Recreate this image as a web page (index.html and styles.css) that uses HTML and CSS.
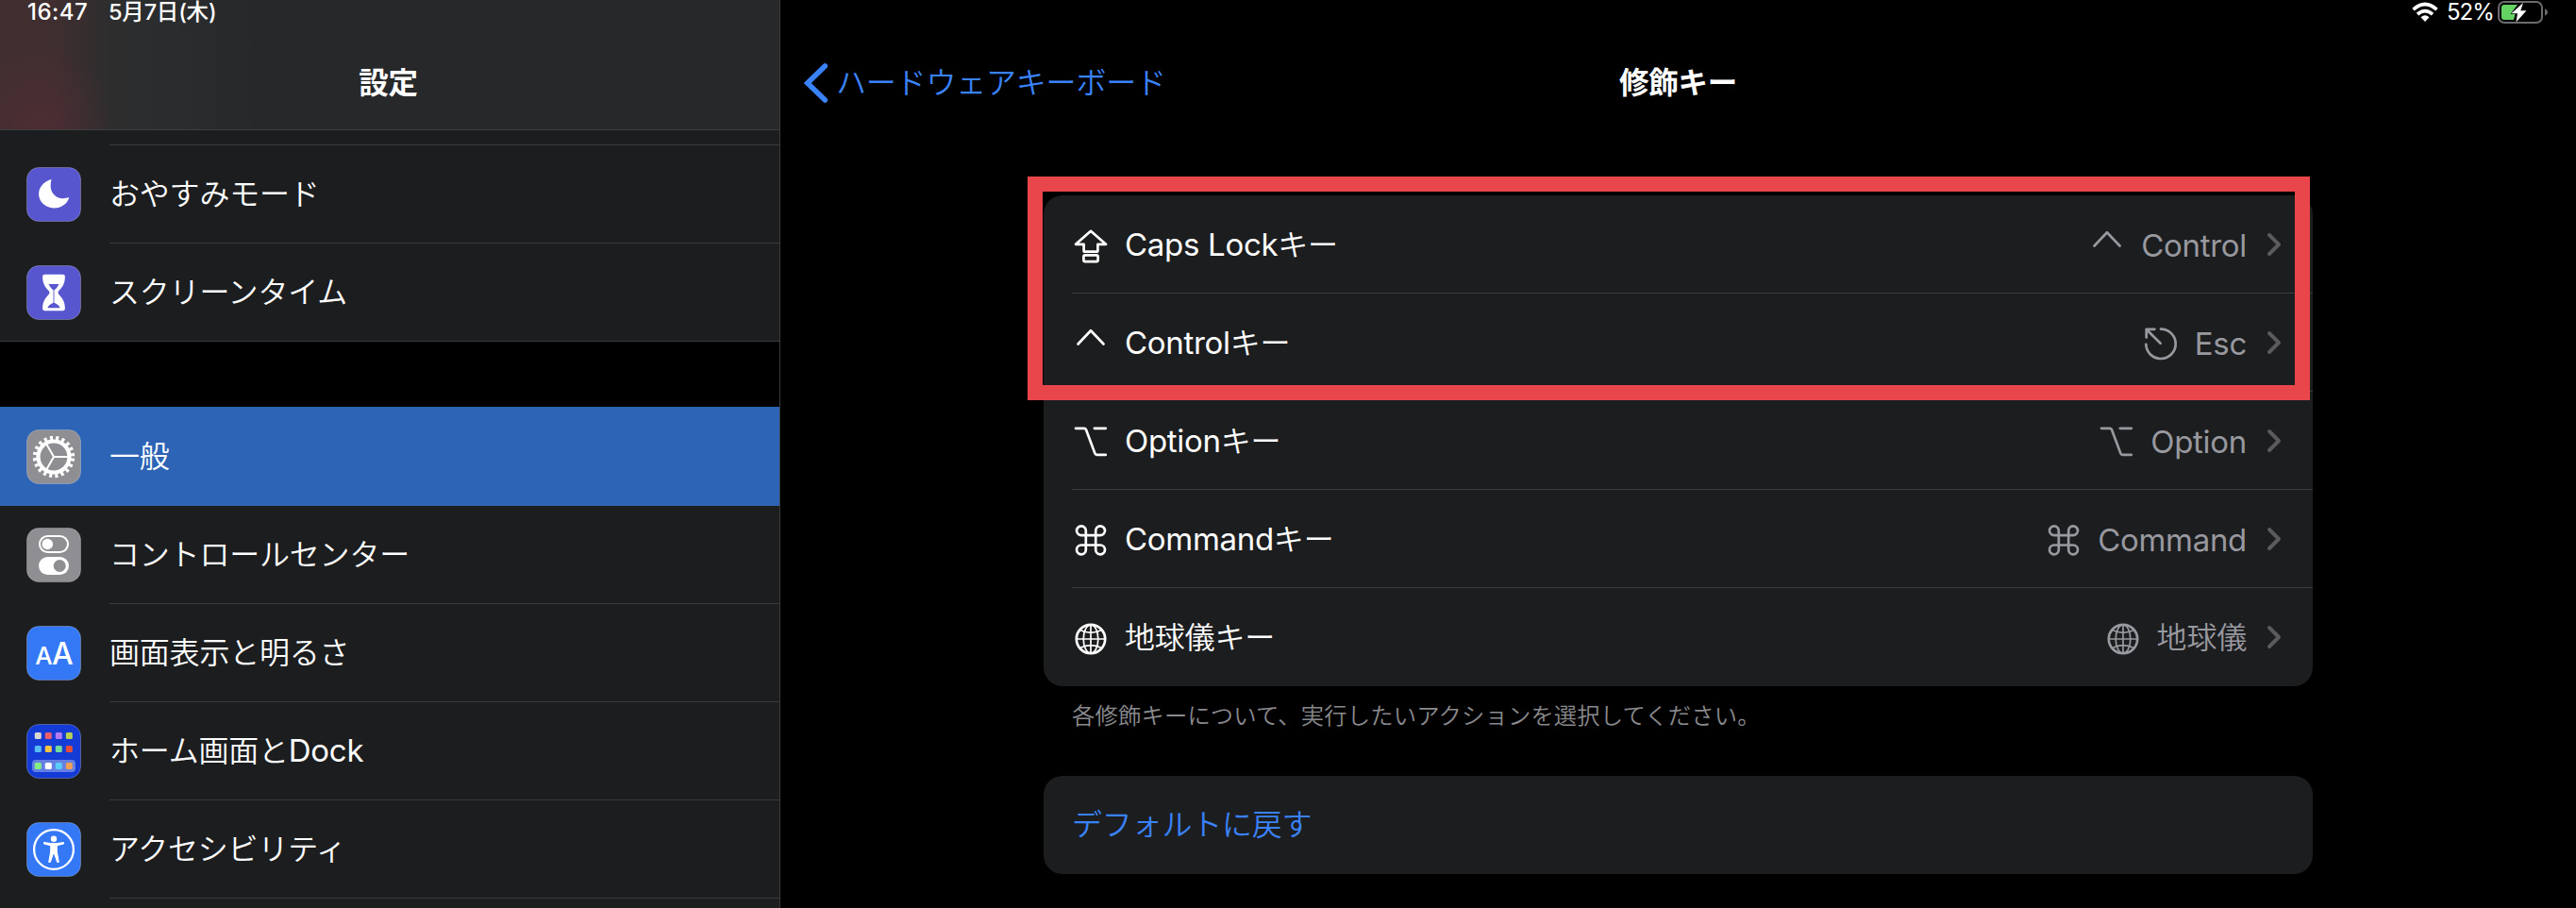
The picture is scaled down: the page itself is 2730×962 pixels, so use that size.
FILE: index.html
```html
<!DOCTYPE html>
<html lang="ja">
<head>
<meta charset="utf-8">
<title>設定</title>
<link rel="stylesheet" href="styles.css">
</head>
<body>
<svg class="sprite" aria-hidden="true">
  <symbol id="caps" viewBox="0 0 40 40"><path d="M20 5.8 36 19.8H27.4V26.4Q27.4 27.6 26.2 27.6H13.8Q12.6 27.6 12.6 26.4V19.8H4Z"/><rect x="12.4" y="31.4" width="15.2" height="6.8" rx="1.6"/></symbol>
  <symbol id="ctrl" viewBox="0 0 40 40"><path d="M6.5 21.5 20 7.3 33.5 21.5"/></symbol>
  <symbol id="esc" viewBox="0 0 40 40"><path d="M20 5.6A15.7 15.7 0 1 1 4.3 21.8M19.6 20.8 5 6.2M4.7 14.6V5.8H13.4"/></symbol>
  <symbol id="opt" viewBox="0 0 40 40"><path d="M4 6.8H13Q14.4 6.8 14.9 8L24.5 33.6Q25 34.8 26.4 34.8H35.8M23.8 6.8H35.8"/></symbol>
  <symbol id="cmd" viewBox="0 0 40 40"><path d="M14.8 16.1V11.4A4.9 4.9 0 1 0 9.9 16.1H30.1A4.9 4.9 0 1 0 25.2 11.4V31.6A4.9 4.9 0 1 0 30.1 26.5H9.9A4.9 4.9 0 1 0 14.8 31.6Z"/></symbol>
  <symbol id="globe" viewBox="0 0 40 40"><g><circle cx="20" cy="22" r="15.2"/></g><g class="thin"><ellipse cx="20" cy="22" rx="7.8" ry="15"/><path d="M20 7V37M5 22H35M8.4 12.6Q20 18 31.6 12.6M8.4 31.4Q20 26 31.6 31.4"/></g></symbol>
  <symbol id="chev" viewBox="0 0 18 28"><path d="M4 4 14 14 4 24"/></symbol>
</svg>
<div class="screen">
  <aside class="sidebar">
    <header class="side-head">
      <div class="status"><span class="time">16:47</span><span class="date">5月7日(木)</span></div>
      <h1 class="title">設定</h1>
    </header>
    <div class="list">
      <div class="stub"></div>
      <div class="item">
        <svg class="app" viewBox="0 0 58 58"><rect class="bg indigo" x=".5" y=".5" width="57" height="57" rx="12.5"/><path fill="#fff" d="M26.6 13C12 17 9 32 19 40C28 47 43 43 45.2 31.8C35.500 36.500 22 29.500 26.600 13Z"/></svg>
        <div class="cell">おやすみモード</div>
      </div>
      <div class="item">
        <svg class="app" viewBox="0 0 58 58"><rect class="bg indigo" x=".5" y=".5" width="57" height="57" rx="12.5"/><path fill="#fff" d="M19.500 9.700H38.500Q41 9.700 40.900 12.500C40.700 21 37 24 34 27.500Q33 29 34 30.500C37 34 40.700 37 40.900 45.500Q41 48.300 38.500 48.300H19.500Q17 48.300 17.100 45.500C17.300 37 21 34 24 30.500Q25 29 24 27.500C21 24 17.300 21 17.100 12.500Q17 9.700 19.500 9.700Z"/><path fill="#5756ce" d="M23.500 20H34.500Q32.500 24 30 26V40Q34 41.500 35.500 44.500Q35.500 45.300 34.500 45.300H23.500Q22.500 45.300 22.500 44.500Q24 41.500 28 40V26Q25.500 24 23.500 20Z"/><path stroke="#fff" stroke-width=".7" d="M28.300 26V40M29.700 26V40"/></svg>
        <div class="cell">スクリーンタイム</div>
      </div>
      <div class="break"></div>
      <div class="item selected">
        <svg class="app" viewBox="0 0 58 58"><rect class="bg gray" x=".5" y=".5" width="57" height="57" rx="12.5"/><g fill="none" stroke="#fff"><circle cx="29" cy="29" r="16.500" stroke-width="4.200"/><circle cx="29" cy="29" r="20" stroke-width="4.400" stroke-dasharray="3.100 3.183" stroke-dashoffset="-1.600"/><path stroke-width="2" d="M29 29H45M29 29 21 15.100M29 29 21 42.900"/></g></svg>
        <div class="cell">一般</div>
      </div>
      <div class="item first">
        <svg class="app" viewBox="0 0 58 58"><rect class="bg gray" x=".5" y=".5" width="57" height="57" rx="12.5"/><rect x="14" y="9" width="30" height="17" rx="8.500" fill="none" stroke="#fff" stroke-width="2"/><circle cx="22.300" cy="17.500" r="5.800" fill="#fff"/><rect x="13" y="31" width="32" height="19" rx="9.500" fill="#fff"/><circle cx="35.200" cy="40.500" r="6.500" fill="#8e8e93"/></svg>
        <div class="cell">コントロールセンター</div>
      </div>
      <div class="item">
        <svg class="app" viewBox="0 0 58 58"><rect class="bg blue" x=".5" y=".5" width="57" height="57" rx="12.5"/><text class="glyph" x="9.200" y="41" font-size="26">A</text><text class="glyph" x="27" y="41" font-size="32">A</text></svg>
        <div class="cell">画面表示と明るさ</div>
      </div>
      <div class="item">
        <svg class="app" viewBox="0 0 58 58"><rect class="bg home" x=".5" y=".5" width="57" height="57" rx="12.5"/><rect x="6" y="38" width="46" height="13" rx="4" fill="#6580e5"/>
          <rect x="8.800" y="9" width="7" height="7" rx="1.500" fill="#d8d8d0"/><rect x="19.800" y="9" width="7" height="7" rx="1.500" fill="#ee5f68"/><rect x="30.800" y="9" width="7" height="7" rx="1.500" fill="#b27bf2"/><rect x="41.800" y="9" width="7" height="7" rx="1.500" fill="#b9d150"/>
          <rect x="8.800" y="23" width="7" height="7" rx="1.500" fill="#57bdf5"/><rect x="19.800" y="23" width="7" height="7" rx="1.500" fill="#f9c440"/><rect x="30.800" y="23" width="7" height="7" rx="1.500" fill="#70d99b"/><rect x="41.800" y="23" width="7" height="7" rx="1.500" fill="#e84d3a"/>
          <rect x="8.800" y="41" width="7" height="7" rx="1.500" fill="#83ef7e"/><rect x="19.800" y="41" width="7" height="7" rx="1.500" fill="#fff"/><rect x="30.800" y="41" width="7" height="7" rx="1.500" fill="#5accf8"/><rect x="41.800" y="41" width="7" height="7" rx="1.500" fill="#f2a154"/></svg>
        <div class="cell">ホーム画面と<span class="latin">Dock</span></div>
      </div>
      <div class="item">
        <svg class="app" viewBox="0 0 58 58"><rect class="bg blue" x=".5" y=".5" width="57" height="57" rx="12.5"/><circle cx="29" cy="29" r="20.900" fill="none" stroke="#fff" stroke-width="2.300"/><circle cx="29" cy="17.700" r="3.200" fill="#fff"/><path fill="#fff" stroke="#fff" stroke-width="1" stroke-linejoin="round" d="M18.500 21.500 25.500 22.500H32.500L39.500 21.500V23L32.300 24.800V31L34.300 42.500H32.700L29.600 33.500H28.400L25.300 42.500H23.700L25.700 31V24.800L18.500 23Z"/></svg>
        <div class="cell">アクセシビリティ</div>
      </div>
      <div class="item"><div class="cell"></div></div>
    </div>
  </aside>
  <main class="detail">
    <header class="nav">
      <div class="status right">
        <svg class="wifi" viewBox="0 0 28 22"><g fill="none" stroke="#fff" stroke-width="3.600"><path d="M1.500 8.200Q14 -3.200 26.500 8.200"/><path d="M6 13.200Q14 6 22 13.200"/></g><path fill="#fff" d="M9.500 16.200Q14 12.200 18.500 16.200L14 20.900Z"/></svg>
        <span class="pct">52%</span>
        <svg class="battery" viewBox="0 0 54 26"><rect x="1" y="2" width="46" height="22" rx="6" fill="none" stroke="#6b6b6d" stroke-width="2"/><path fill="#6b6b6d" d="M50 9.200Q53 10.500 53 13T50 16.800Z"/><path fill="#65d264" d="M7 5H21L13.500 15H18.500L17 21H7Q4 21 4 18V8Q4 5 7 5Z"/><path fill="#fff" d="M27 3 14.500 14.300H21L19.500 23.500 30.500 11.300H24.300Z"/></svg>
      </div>
      <div class="bar">
        <a class="back"><svg viewBox="0 0 26 44"><path d="M22.300 4 3.800 22 22.300 40"/></svg><span>ハードウェアキーボード</span></a>
        <h2 class="title">修飾キー</h2>
      </div>
    </header>
    <div class="content">
      <section class="card">
        <div class="row"><svg class="key"><use href="#caps"/></svg><span class="label"><span class="latin">Caps Lock</span>キー</span><span class="value"><svg class="key"><use href="#ctrl"/></svg><span class="latin">Control</span></span><svg class="chev"><use href="#chev"/></svg></div>
        <div class="row"><svg class="key"><use href="#ctrl"/></svg><span class="label"><span class="latin">Control</span>キー</span><span class="value"><svg class="key"><use href="#esc"/></svg><span class="latin">Esc</span></span><svg class="chev"><use href="#chev"/></svg></div>
        <div class="row"><svg class="key"><use href="#opt"/></svg><span class="label"><span class="latin">Option</span>キー</span><span class="value"><svg class="key"><use href="#opt"/></svg><span class="latin">Option</span></span><svg class="chev"><use href="#chev"/></svg></div>
        <div class="row"><svg class="key"><use href="#cmd"/></svg><span class="label"><span class="latin">Command</span>キー</span><span class="value"><svg class="key"><use href="#cmd"/></svg><span class="latin">Command</span></span><svg class="chev"><use href="#chev"/></svg></div>
        <div class="row"><svg class="key"><use href="#globe"/></svg><span class="label">地球儀キー</span><span class="value"><svg class="key"><use href="#globe"/></svg><span class="word">地球儀</span></span><svg class="chev"><use href="#chev"/></svg></div>
        <div class="highlight"></div>
      </section>
      <p class="note">各修飾キーについて、実行したいアクションを選択してください。</p>
      <section class="card reset">デフォルトに戻す</section>
    </div>
  </main>
</div>
</body>
</html>
```
FILE: styles.css
```css
* { box-sizing: border-box; }

body {
  margin: 0;
  background: #000;
  color: #fff;
  font-family: Inter, "Noto Sans CJK JP", sans-serif;
  font-size: 32px;
  font-weight: 350;
  letter-spacing: -0.2px;
  overflow: hidden;
}

.sprite { display: none; }

.latin {
  font-size: 33px;
  font-weight: 400;
  line-height: 1;
  letter-spacing: -0.3px;
}

.screen {
  display: flex;
  width: 2730px;
  height: 962px;
  overflow: hidden;
}

/* Sidebar */
.sidebar {
  flex: none;
  width: 827px;
  border-right: 1px solid #3a3a3c;
  background: #1c1d1f;
}

.side-head {
  height: 138px;
  border-bottom: 1px solid #3d3e40;
  background:
    radial-gradient(ellipse 75px 90px at 45px 137px, rgba(90, 44, 56, .5), transparent),
    linear-gradient(90deg, #412e2f 0, #3f2e30 60px, #2e2d2e 115px, #2b2d2e 150px, #27282a 280px);
}

.status {
  display: flex;
  height: 26px;
  align-items: center;
  line-height: 26px;
  font-size: 24px;
  font-weight: 450;
}

.side-head .status { padding-left: 29px; }
.time { width: 86px; letter-spacing: .5px; }
.date { font-size: 23.500px; letter-spacing: -.2px; }

.title {
  margin: 0;
  font-size: 31.500px;
  font-weight: 600;
  letter-spacing: -.2px;
  line-height: 48px;
  text-align: center;
}

.side-head .title { margin: 38px 3px 0 0; }

.list { display: flex; flex-direction: column; }
.stub { height: 15px; }

.item {
  display: flex;
  flex: none;
  height: 104px;
  padding-left: 28px;
  align-items: center;
}

.app { flex: none; width: 58px; height: 58px; margin-top: 1px; }
.app + .cell { margin-left: 30px; }
.item > .cell:only-child { margin-left: 88px; }

.cell {
  flex: 1;
  height: 104px;
  border-top: 1px solid #3a3b3d;
  line-height: 103px;
}

.break {
  height: 70px;
  border-top: 1px solid #3a3b3d;
  background: #000;
}

.item.selected { height: 105px; background: #2d64b6; }
.item.first { height: 103px; }
.item.selected .cell, .item.first .cell { height: 103px; border-top: 0; }

.bg { stroke: rgba(255, 255, 255, .25); stroke-width: 1; }
.indigo { fill: #5756ce; }
.gray { fill: #8e8e93; }
.blue { fill: #3478f6; }
.home { fill: #143bd5; }
.glyph { fill: #fff; font-weight: 450; letter-spacing: 0; }

/* Detail pane */
.detail { flex: 1; background: #000; }
.nav { height: 207px; }

.status.right {
  justify-content: flex-end;
  padding-right: 29px;
}

.wifi { width: 28px; height: 22px; margin-right: 9px; }
.pct { width: 54px; font-size: 24px; font-weight: 400; letter-spacing: -1px; }
.battery { width: 54px; height: 26px; }

.bar {
  display: grid;
  grid-template-columns: 1fr auto 1fr;
  align-items: center;
  height: 48px;
  margin-top: 38px;
}

.back {
  display: flex;
  align-items: center;
  padding-left: 25px;
  gap: 8px;
  color: #3a82f7;
  line-height: 48px;
}

.back svg { width: 26px; height: 44px; }
.back path { fill: none; stroke: #3a82f7; stroke-width: 5.600; stroke-linecap: round; stroke-linejoin: miter; }

.content { width: 1345px; margin-left: 279px; }

.card {
  position: relative;
  border-radius: 20px;
  background: #1c1d1f;
}

.row {
  display: flex;
  align-items: center;
  height: 104px;
  padding: 0 32px 1px 30px;
  background: linear-gradient(#3a3b3d, #3a3b3d) 30px 100% / 100% 1px no-repeat;
}

.row:nth-child(5) { background: none; }

.row svg { fill: none; stroke: currentColor; stroke-linecap: round; stroke-linejoin: round; }
.key { flex: none; width: 40px; height: 40px; stroke-width: 2.700; }
.thin { stroke-width: 1.700; }
.label { flex: 1; margin-left: 16px; padding-top: 3px; line-height: 40px; }

.value {
  display: flex;
  align-items: center;
  gap: 16px;
  color: #98989f;
}

.value .latin, .value .word { padding-top: 3px; line-height: 40px; }
.value .latin { padding-top: 2px; }
.row .chev { width: 18px; height: 28px; margin-left: 20px; stroke: #5b5b5f; stroke-width: 3.900; }

.highlight {
  position: absolute;
  left: -17px;
  top: -20px;
  width: 1359px;
  height: 237px;
  border: 16px solid #e8464a;
}

.note {
  margin: 0;
  padding: 13px 0 0 30px;
  height: 95px;
  color: #8a8a8e;
  font-size: 24.300px;
  letter-spacing: .18px;
  line-height: 36px;
}

.reset {
  height: 104px;
  padding-left: 30px;
  color: #3a82f7;
  line-height: 104px;
}
```
